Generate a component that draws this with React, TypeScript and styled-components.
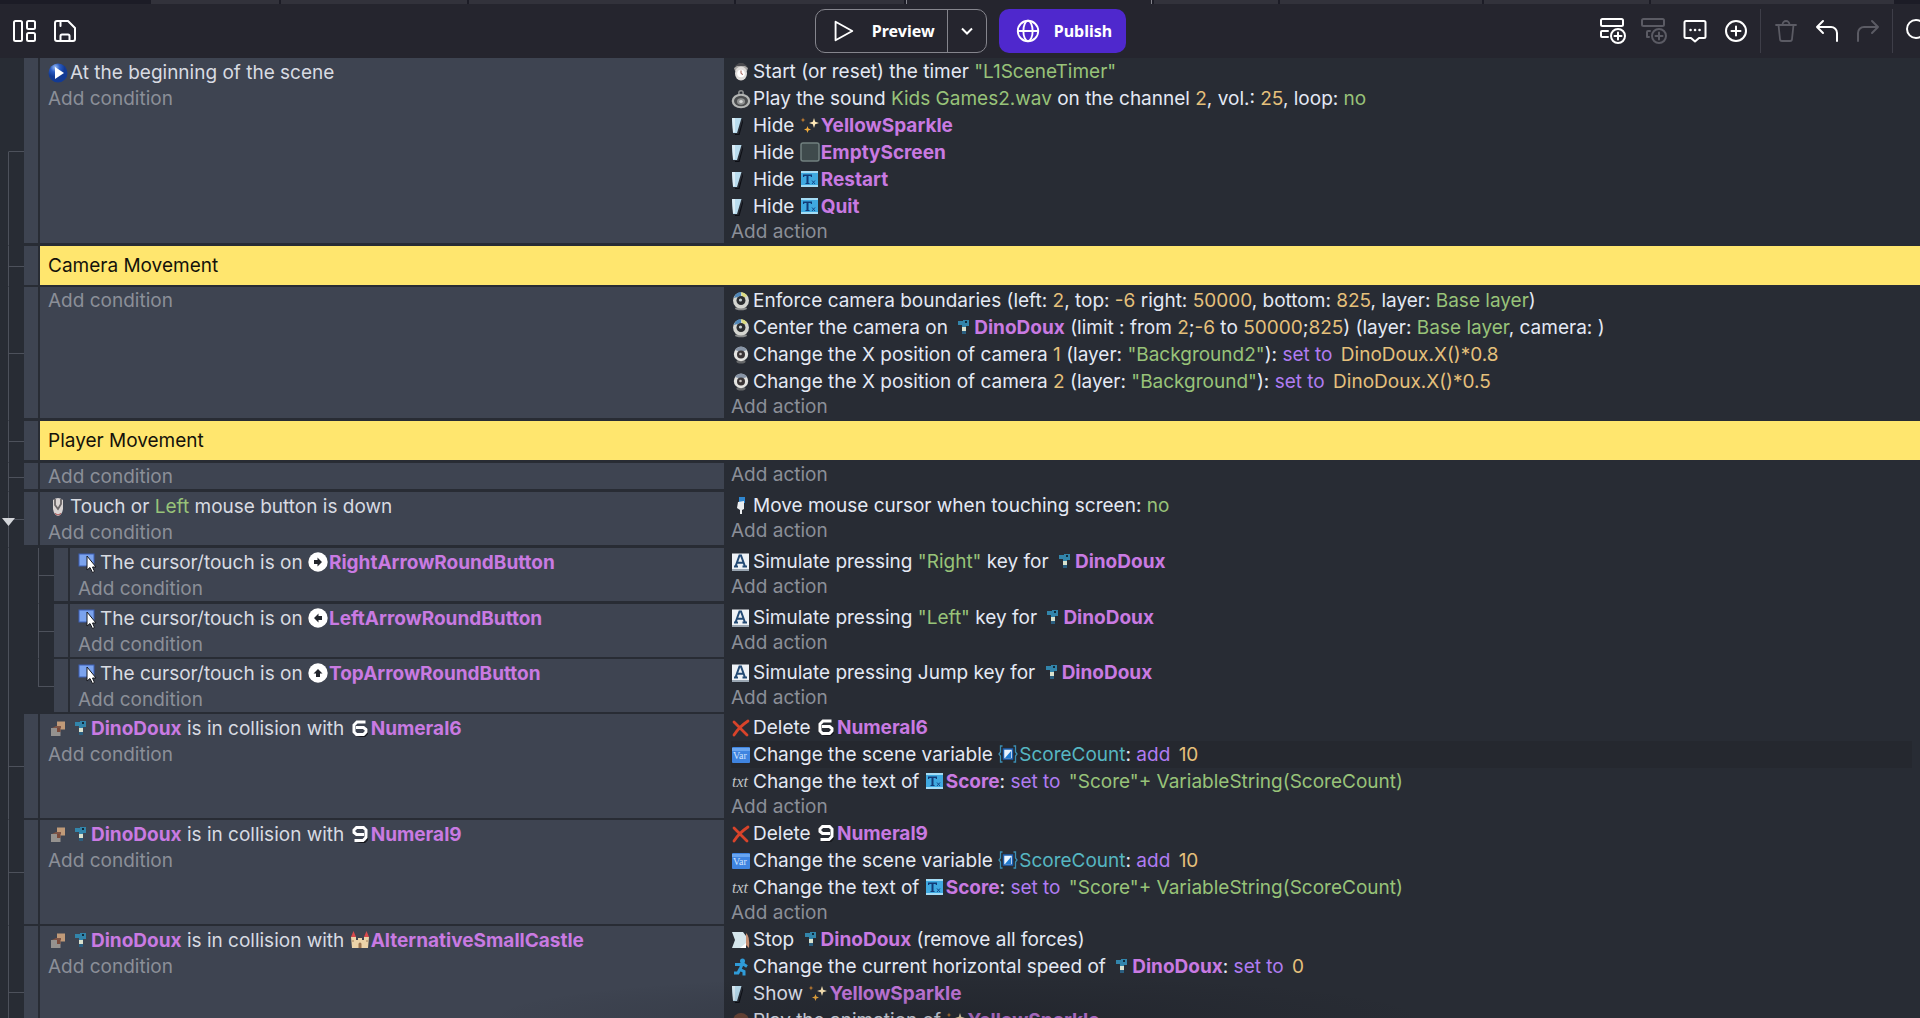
import React, { ReactNode } from 'react';
import styled, { createGlobalStyle, css } from 'styled-components';

const colors = {
  toolbar: '#25252e',
  tabStrip: '#1c1c26',
  tab: '#32323b',
  sheet: '#282c34',
  block: '#3e4451',
  comment: '#ffe66e',
  line: '#4d515b',
  muted: '#8b8f98',
  conditionText: '#d8dbe2',
  actionText: '#e4e9f4',
  object: '#c97ae2',
  number: '#e5c07b',
  string: '#98c379',
  operator: '#b07cf2',
  variable: '#56b6c2',
  primary: '#4f28cd',
};

const GlobalStyle = createGlobalStyle`
  * { box-sizing: border-box; }
  body { margin: 0; overflow: hidden; background: ${colors.sheet}; }
  button { font: inherit; color: inherit; background: none; border: 0; padding: 0; margin: 0; cursor: pointer; }
`;

const Page = styled.div`
  height: 100vh;
  display: flex;
  flex-direction: column;
  overflow: hidden;
  position: relative;
  background: ${colors.sheet};
  font-family: Inter, "Liberation Sans", sans-serif;
  font-size: 19px;
`;

const TabStrip = styled.div`
  display: flex;
  flex: none;
  height: 4px;
  padding-left: 151px;
  gap: 2px;
  background: ${colors.tabStrip};
`;

const Tab = styled.div<{ $width: number; $active?: boolean }>`
  flex: 0 1 ${p => p.$width}px;
  background: ${p => (p.$active ? colors.toolbar : colors.tab)};
  ${p => p.$active && css`border: solid #85858d; border-width: 0 1px;`}
`;

const Toolbar = styled.header`
  flex: none;
  height: 54px;
  padding-left: 21px;
  display: grid;
  grid-template-columns: 1fr auto 1fr;
  align-items: center;
  background: ${colors.toolbar};
  color: #fff;
  overflow: hidden;
`;

const ToolGroup = styled.div<{ $side: 'left' | 'right' }>`
  display: flex;
  align-items: center;
  gap: 12px;
  ${p => (p.$side === 'left' ? 'margin-left: -12px;' : 'justify-content: flex-end; margin-right: -12px;')}
`;

const IconButton = styled.button`
  flex: none;
  width: 29px;
  height: 32px;
  display: grid;
  place-items: center;
  &:disabled { color: #5b5b64; }
`;

const Divider = styled.span`
  width: 1px;
  height: 44px;
  margin: 0 -2px;
  background: #3e3e48;
`;

const MainActions = styled.div`
  display: flex;
  gap: 12px;
  font: 700 16px "Noto Sans", sans-serif;
`;

const SplitButton = styled.div`
  display: flex;
  height: 44px;
  border: 1px solid #85858d;
  border-radius: 10px;
`;

const PreviewButton = styled.button`
  display: flex;
  align-items: center;
  gap: 16px;
  padding: 0 12px 0 14px;
`;

const MenuButton = styled.button`
  width: 39px;
  display: grid;
  place-items: center;
  border-left: 1px solid #85858d;
`;

const PublishButton = styled.button`
  display: flex;
  align-items: center;
  gap: 13px;
  height: 44px;
  padding: 0 14px 0 16px;
  border-radius: 10px;
  background: ${colors.primary};
`;

const Sheet = styled.main`
  flex: 1;
  min-height: 0;
  overflow: hidden;
`;

const Row = styled.div`
  display: flex;
  padding-left: 8px;
`;

const Gutter = styled.div`
  position: relative;
  flex: none;
  width: 16px;
  display: grid;
  grid-template-rows: 1fr 1fr;
`;

const Branch = styled.span<{ $line?: boolean; $tick?: boolean }>`
  border-left: 1px solid ${p => (p.$line ? colors.line : 'transparent')};
  border-bottom: 1px solid ${p => (p.$tick ? colors.line : 'transparent')};
`;

const Rail = styled.span`
  flex: none;
  width: 30px;
  border-left: 1px solid ${colors.line};
`;

const Collapse = styled.button`
  position: absolute;
  left: -6px;
  top: calc(50% - 2px);
  width: 13px;
  height: 8px;
  display: block;
  line-height: 0;
`;

const Body = styled.div<{ $gap: number }>`
  flex: 1;
  min-width: 0;
  display: flex;
  padding-bottom: ${p => p.$gap}px;
`;

const Handle = styled.span`
  flex: none;
  width: 14px;
  margin-right: 2px;
  background: ${colors.block};
`;

const Conditions = styled.section<{ $nested?: boolean }>`
  flex: none;
  width: calc(40vw - ${p => (p.$nested ? 114 : 84)}px);
  padding: 1px 8px 0;
  background: ${colors.block};
  color: ${colors.conditionText};
`;

const Actions = styled.section`
  flex: 1;
  min-width: 0;
  padding-left: 7px;
  color: ${colors.actionText};
`;

const Comment = styled.p`
  flex: 1;
  margin: 0;
  padding: 0 8px;
  height: 39px;
  line-height: 40px;
  background: ${colors.comment};
  color: #14120a;
`;

const Line = styled.div<{ $hover?: boolean }>`
  display: flex;
  align-items: center;
  height: 27px;
  ${p => p.$hover && css`background: #25282f; margin-right: 8px;`}
`;

const Sentence = styled.span`
  line-height: 27px;
  white-space: pre;
`;

const IconSlot = styled.span<{ $object?: boolean }>`
  flex: none;
  display: inline-flex;
  vertical-align: middle;
  width: ${p => (p.$object ? 21 : 22)}px;
  margin-top: ${p => (p.$object ? -3 : 0)}px;
`;

const AddButton = styled.button<{ $wide?: boolean }>`
  display: block;
  height: ${p => (p.$wide ? 25 : 23)}px;
  line-height: 23px;
  color: ${colors.muted};
`;

const Num = styled.span`color: ${colors.number};`;
const Str = styled.span`color: ${colors.string};`;
const Op = styled.span`color: ${colors.operator}; margin-right: 3px;`;
const Var = styled.span`color: ${colors.variable};`;
const Name = styled.strong`color: ${colors.object}; font-weight: 700;`;

const BottomShade = styled.div`
  position: absolute;
  left: 25%;
  right: 25%;
  bottom: 0;
  height: 44px;
  pointer-events: none;
  background: radial-gradient(ellipse at 50% 100%, rgba(20, 22, 28, 0.25), transparent 70%);
`;

/* ---------- small pictures used inside the instructions ---------- */

const glyphs: Record<string, ReactNode> = {
  play: (
    <>
      <defs><radialGradient id="playFill" cx="35%" cy="20%"><stop offset="0" stopColor="#9dbff2" /><stop offset=".5" stopColor="#2a5cc4" /><stop offset="1" stopColor="#123a94" /></radialGradient></defs>
      <circle cx="10" cy="10" r="9.5" fill="url(#playFill)" /><path d="M7 4l9 6-9 6z" fill="#fff" />
    </>
  ),
  timer: (
    <><path d="M4 4l4-3h4l4 3-2 3H6z" fill="#4a4a4e" /><path d="M3 6l3-2 8 0 3 2-1 3H4z" fill="#a9a7a5" /><ellipse cx="10" cy="11.5" rx="6" ry="7" fill="#e0dddb" /><circle cx="10" cy="11.5" r="3.8" fill="#fff" /><path d="M10 8.500v3l2 1" stroke="#a05a50" fill="none" /></>
  ),
  sound: (
    <><circle cx="10" cy="4" r="2.2" fill="none" stroke="#8d8f90" strokeWidth="1.5" /><ellipse cx="10" cy="12" rx="9.300" ry="7.300" fill="#b4b6b5" /><ellipse cx="10" cy="12" rx="7" ry="5.300" fill="#4c4e50" /><ellipse cx="10" cy="12.5" rx="4" ry="3.2" fill="#8f9191" /><ellipse cx="10" cy="12.5" rx="1.8" ry="1.5" fill="#d4d6d6" /></>
  ),
  visible: (
    <><path d="M4 18h3.500L12 3v3L8.500 19H4z" fill="#0c0e14" /><path d="M1 2h9.500L6 17H2z" fill="#b9dcee" /><path d="M1 2h3v14H2z" fill="#dcedf6" /></>
  ),
  sparkle: (
    <><path d="M14 3l1.200 3.800L19 8l-3.800 1.200L14 13l-1.200-3.800L9 8l3.800-1.200z" fill="#ffe9b8" /><path d="M7.500 11l.9 2.600L11 14.500l-2.600.9L7.500 18l-.9-2.600L4 14.500l2.600-.9z" fill="#f2ac3c" /><path d="M3 2.500l.6 1.900 1.900.6-1.900.6L3 7.500l-.6-1.900L.5 5l1.900-.6z" fill="#dc8b30" /></>
  ),
  empty: <rect x="1" y="1" width="18" height="18" rx="2" fill="#3f4a4c" stroke="#71807f" strokeWidth="1.5" />,
  textObject: (
    <><rect x="1" y="2" width="17" height="16" fill="#3fa9e0" /><path d="M1 2h17v2H1zM1 16h17v2H1z" fill="#a5dcf5" /><path d="M3 5.500h9v2.500h-1l-.5-1H8.500v7h1v1H5.500v-1h1V7H4.500L4 8H3z" fill="#113a77" /><path d="M12 11.500l3 3.500m0-3.500L12 15" stroke="#134a8c" /></>
  ),
  camera: (
    <><ellipse cx="10" cy="17.5" rx="6" ry="1.8" fill="#8a8c8c" /><circle cx="10" cy="9.5" r="8" fill="#d4d5d0" /><path d="M3 7a8 8 0 0 1 7-6v4z" fill="#4f86b8" /><path d="M10 1a8 8 0 0 1 6 4l-4 2z" fill="#dcdc80" /><circle cx="10" cy="9.5" r="4.5" fill="#2b2d30" /><circle cx="9.5" cy="9" r="1.6" fill="#c4ccd0" /></>
  ),
  cameraSmall: (
    <><ellipse cx="10" cy="16.5" rx="4.5" ry="2" fill="#66686a" /><circle cx="10" cy="9" r="7.2" fill="#e4e4e1" /><path d="M4 5a7 7 0 0 1 12 0l-3 1H7z" fill="#8794a6" /><circle cx="10" cy="9.5" r="4" fill="#3a3536" /><circle cx="9.5" cy="9" r="1.3" fill="#c9c3c0" /></>
  ),
  mouse: (
    <><path d="M5 3q5-4 10 0v9q-1 6-5 7-4-1-5-7z" fill="#d9d4d3" /><path d="M7 2v6l3 4 3-5V2" stroke="#6a6668" strokeWidth="1.8" fill="none" /><path d="M7 16.500q3 3 6 0" stroke="#a84a4a" fill="none" /></>
  ),
  finger: (
    <><path d="M8 1h6v6H8z" fill="#2f86d0" /><path d="M7 6l6-1v8l-2 1v4H9v-4l-3-2z" fill="#eceef0" /></>
  ),
  cursor: (
    <><rect x="1" y="1" width="15" height="12" fill="#7ba3ee" stroke="#3c5fb4" /><path d="M9 3v14l3-2.500 2.500 5 2-1-2-4.500h3.500z" fill="#fff" stroke="#16181e" /></>
  ),
  key: (
    <><rect x="1" y="1.5" width="17" height="17" fill="#eef2f6" /><path d="M1 17h17v2H1z" fill="#9aa6b2" /><path d="M3 14.500h4M11.500 14.500h4.500M4.500 14.500l4-11h1.500l4 11M6.500 10.800h6" stroke="#234a74" strokeWidth="2" fill="none" /></>
  ),
  dino: (
    <><path d="M5 4h5V3h6v6h-3v2H9V8H5z" fill="#3285ab" /><path d="M12 4h2v2h-2z" fill="#0f2c3c" /><path d="M9 10h4v4H9z" fill="#d9e2cf" /><path d="M9 14h4v3H9z" fill="#2b5f80" /></>
  ),
  collision: (
    <><rect x="9" y="2.5" width="8" height="8" fill="#c09a78" /><path d="M4 9l4-2h5v2z" fill="#7d5446" /><rect x="3" y="9" width="9.5" height="8" fill="#95928f" /><path d="M9 9h3.500v4H9z" fill="#7b4a3a" /></>
  ),
  six: (
    <><path d="M6 19h9l3-3V9l-2 8z" fill="#14151a" /><path d="M15.500 4H7L4 7v7l2.500 2.500h7L16 14v-2.500L13.500 9.500H6" stroke="#fff" strokeWidth="3" fill="none" /></>
  ),
  nine: (
    <><path d="M6 19h9l3-3V9l-2 8z" fill="#14151a" /><path d="M4.500 16.500H13l3-3V6l-2.500-2.500h-7L4 6v2.500L6.500 10.500H14" stroke="#fff" strokeWidth="3" fill="none" /></>
  ),
  castle: (
    <><path d="M1 7l2.500-6L6 7zM14 7l2.500-6L19 7z" fill="#d8484c" /><path d="M1 7h5v3h2V8h4v2h2V7h5l-1 11H2z" fill="#ecd3a8" /><path d="M8.500 18v-4a1.500 1.500 0 0 1 3 0v4z" fill="#9a7550" /><path d="M3 10v2m14-2v2" stroke="#a5825a" /></>
  ),
  cross: <path d="M3 4q5 5 13 13M17 3Q8 9 3 17" stroke="#d8432a" strokeWidth="2.8" fill="none" strokeLinecap="round" />,
  variableIcon: (
    <><rect x="1" y="2" width="18" height="16" rx="1" fill="#3f84e0" /><path d="M1 3h18v3H1z" fill="#69a5f0" /><text x="2" y="14" fontSize="10" fontFamily="Liberation Serif" fill="#cfe3ff">Var</text></>
  ),
  braces: (
    <><path d="M4.500 2H2.500v6L1 10l1.500 2v6h2M15.500 2h2v6l1.500 2-1.500 2v6h-2" stroke="#3b8fb4" strokeWidth="1.3" fill="none" /><rect x="5.5" y="5" width="9" height="10" fill="#eaf4ff" stroke="#1d5fb0" strokeWidth="1.5" /><path d="M7 14l6-7v7z" fill="#1f7ad0" /></>
  ),
  txt: <text x="1" y="15" fontSize="16" fontStyle="italic" fontFamily="Liberation Serif" fill="#c2c4c6">txt</text>,
  stop: (
    <><path d="M1 2h11l3 4v12H1l3-8z" fill="#d5e6ec" /><path d="M15 3q4 3 3 15l-3-3z" fill="#c58e72" /><path d="M9 18l6-5v5z" fill="#fff" /></>
  ),
  run: (
    <><circle cx="11.5" cy="4" r="2.5" fill="#2f9bd8" /><path d="M4 7.500h9l3 2M11 7.500l-2 5 4 2v4M9 12l-2 4H3" stroke="#2f9bd8" strokeWidth="3" fill="none" /></>
  ),
  anim: <><circle cx="10" cy="10" r="8" fill="#6d4636" /><circle cx="10" cy="11" r="4" fill="#b98560" /></>,
};

const roundArrow = (angle: number) => (
  <><circle cx="10" cy="10" r="9.7" fill="#fff" /><path transform={`rotate(${angle} 10 10)`} d="M6 8h3.500V5.500L14 10l-4.500 4.500V12H6z" fill="#22252c" /></>
);
glyphs.right = roundArrow(0);
glyphs.left = roundArrow(180);
glyphs.top = roundArrow(-90);

const Icon = ({ name, object }: { name: string; object?: boolean }) => (
  <IconSlot $object={object}>
    <svg width="20" height="20" viewBox="0 0 20 20" aria-hidden="true">{glyphs[name]}</svg>
  </IconSlot>
);

const Obj = ({ icon, children }: { icon: string; children: string }) => (
  <><Icon name={icon} object /><Name>{children}</Name></>
);

const Dino = () => <Obj icon="dino">DinoDoux</Obj>;

const Item = ({ icon, hover, children }: { icon: string; hover?: boolean; children: ReactNode }) => (
  <Line $hover={hover}><Icon name={icon} /><Sentence>{children}</Sentence></Line>
);

type EventProps = {
  gap?: number;
  first?: boolean;
  last?: boolean;
  nested?: boolean;
  parent?: boolean;
  conditions?: ReactNode;
  children?: ReactNode;
};

const Event = ({ gap = 2, first, last, nested, parent, conditions, children }: EventProps) => (
  <Row>
    {nested && <Rail />}
    <Gutter>
      <Branch $line={!first} $tick />
      <Branch $line={!last} />
      {parent && (
        <Collapse aria-label="Collapse sub-events">
          <svg width="13" height="8" viewBox="0 0 13 8"><path d="M0 0h13L6.500 8z" fill="#d4d6da" /></svg>
        </Collapse>
      )}
    </Gutter>
    <Body $gap={gap}>
      <Handle />
      <Conditions $nested={nested}>
        {conditions}
        <AddButton $wide>Add condition</AddButton>
      </Conditions>
      <Actions>
        {children}
        <AddButton>Add action</AddButton>
      </Actions>
    </Body>
  </Row>
);

const CommentEvent = ({ gap, children }: { gap: number; children: string }) => (
  <Row>
    <Gutter><Branch $line $tick /><Branch $line /></Gutter>
    <Body $gap={gap}><Handle /><Comment>{children}</Comment></Body>
  </Row>
);

const ScoreActions = ({ digit, hover }: { digit: 'six' | 'nine'; hover?: boolean }) => (
  <>
    <Item icon="cross">Delete <Obj icon={digit}>{digit === 'six' ? 'Numeral6' : 'Numeral9'}</Obj></Item>
    <Item icon="variableIcon" hover={hover}>Change the scene variable <Icon name="braces" object /><Var>ScoreCount</Var>: <Op>add</Op> <Num>10</Num></Item>
    <Item icon="txt">Change the text of <Obj icon="textObject">Score</Obj>: <Op>set to</Op> <Str>"Score"+ VariableString(ScoreCount)</Str></Item>
  </>
);

const Stroke = ({ children, size = 28 }: { children: ReactNode; size?: number }) => (
  <svg width={size} height={size} viewBox="0 0 28 28" fill="none" stroke="currentColor" strokeWidth="2" strokeLinecap="round" strokeLinejoin="round" aria-hidden="true">{children}</svg>
);

const AddRow = ({ sub }: { sub?: boolean }) => (
  <Stroke>
    <rect x="2" y="2" width="22" height="7" rx="1.5" />
    <path d={sub ? 'M10 14H8a1 1 0 0 0-1 1v5h2' : 'M9 14H3a1 1 0 0 0-1 1v4a1 1 0 0 0 1 1h6'} />
    <circle cx="19" cy="19" r="7" />
    <path d="M19 15.500v7M15.500 19h7" />
  </Stroke>
);

const tabs = [128, 186, 265, 168, 246, 124, 202, 165, 243];

export default function App() {
  return (
    <Page>
      <GlobalStyle />
      <TabStrip>{tabs.map((w, i) => <Tab key={i} $width={w} $active={i === 4} />)}</TabStrip>
      <Toolbar>
        <ToolGroup $side="left">
          <IconButton aria-label="Panels"><Stroke><rect x="4" y="4" width="8" height="20" rx="1.5" /><rect x="17" y="4" width="8" height="8" rx="1.5" /><rect x="17" y="16" width="8" height="8" rx="1.5" /></Stroke></IconButton>
          <IconButton aria-label="Save"><Stroke><path d="M6 4h11l7 7v11a2 2 0 0 1-2 2H6a2 2 0 0 1-2-2V6a2 2 0 0 1 2-2zM9.500 4v5M9.500 24v-5a1.500 1.500 0 0 1 1.500-1.500h6a1.500 1.500 0 0 1 1.500 1.500v5" /></Stroke></IconButton>
        </ToolGroup>
        <MainActions>
          <SplitButton>
            <PreviewButton><Stroke size={26}><path d="M6 4l18 10L6 24z" /></Stroke>Preview</PreviewButton>
            <MenuButton aria-label="Preview options"><svg width="12" height="8" viewBox="0 0 12 8" fill="none" stroke="currentColor" strokeWidth="2"><path d="M1 1.500l5 5 5-5" /></svg></MenuButton>
          </SplitButton>
          <PublishButton><Stroke size={26}><circle cx="14" cy="14" r="11" /><ellipse cx="14" cy="14" rx="5" ry="11" /><path d="M3 14h22" /></Stroke>Publish</PublishButton>
        </MainActions>
        <ToolGroup $side="right">
          <IconButton aria-label="Add event"><AddRow /></IconButton>
          <IconButton aria-label="Add sub-event" disabled><AddRow sub /></IconButton>
          <IconButton aria-label="Add comment"><Stroke><path d="M5 4h18a1.500 1.500 0 0 1 1.500 1.500v14a1.500 1.500 0 0 1-1.500 1.500h-5l-4 3.500-4-3.500H5a1.500 1.500 0 0 1-1.500-1.500v-14A1.500 1.500 0 0 1 5 4z" /><path d="M9.500 13h.1M14 13h.1M18.500 13h.1" strokeWidth="2.5" /></Stroke></IconButton>
          <IconButton aria-label="Add"><Stroke><circle cx="14" cy="14" r="10" /><path d="M14 9.500v9M9.500 14h9" /></Stroke></IconButton>
          <Divider />
          <IconButton aria-label="Delete" disabled><Stroke><path d="M4 8h20M6.500 8l1.500 14a2 2 0 0 0 2 2h8a2 2 0 0 0 2-2l1.500-14M10.500 8a3.500 4 0 0 1 7 0" strokeWidth="1.8" /></Stroke></IconButton>
          <IconButton aria-label="Undo"><Stroke><path d="M10 4L4 10l6 6M4 10h14a6 6 0 0 1 6 6v8" /></Stroke></IconButton>
          <IconButton aria-label="Redo" disabled><Stroke><path d="M18 4l6 6-6 6M24 10H10a6 6 0 0 0-6 6v8" /></Stroke></IconButton>
          <Divider />
          <IconButton aria-label="Search"><Stroke><circle cx="12" cy="12" r="9" /><path d="M19 19l6 6" /></Stroke></IconButton>
        </ToolGroup>
      </Toolbar>

      <Sheet>
        <Event first gap={3} conditions={<Item icon="play">At the beginning of the scene</Item>}>
          <Item icon="timer">Start (or reset) the timer <Str>"L1SceneTimer"</Str></Item>
          <Item icon="sound">Play the sound <Str>Kids Games2.wav</Str> on the channel <Num>2</Num>, vol.: <Num>25</Num>, loop: <Str>no</Str></Item>
          <Item icon="visible">Hide <Obj icon="sparkle">YellowSparkle</Obj></Item>
          <Item icon="visible">Hide <Obj icon="empty">EmptyScreen</Obj></Item>
          <Item icon="visible">Hide <Obj icon="textObject">Restart</Obj></Item>
          <Item icon="visible">Hide <Obj icon="textObject">Quit</Obj></Item>
        </Event>
        <CommentEvent gap={2}>Camera Movement</CommentEvent>
        <Event gap={3}>
          <Item icon="camera">Enforce camera boundaries (left: <Num>2</Num>, top: <Num>-6</Num> right: <Num>50000</Num>, bottom: <Num>825</Num>, layer: <Str>Base layer</Str>)</Item>
          <Item icon="camera">Center the camera on <Dino /> (limit : from <Num>2</Num>;<Num>-6</Num> to <Num>50000</Num>;<Num>825</Num>) (layer: <Str>Base layer</Str>, camera: )</Item>
          <Item icon="cameraSmall">Change the X position of camera <Num>1</Num> (layer: <Str>"Background2"</Str>): <Op>set to</Op> <Num>DinoDoux.X()*0.8</Num></Item>
          <Item icon="cameraSmall">Change the X position of camera <Num>2</Num> (layer: <Str>"Background"</Str>): <Op>set to</Op> <Num>DinoDoux.X()*0.5</Num></Item>
        </Event>
        <CommentEvent gap={3}>Player Movement</CommentEvent>
        <Event gap={3} />
        <Event gap={3} parent conditions={<Item icon="mouse">Touch or <Str>Left</Str> mouse button is down</Item>}>
          <Item icon="finger">Move mouse cursor when touching screen: <Str>no</Str></Item>
        </Event>
        <Event nested gap={3} conditions={<Item icon="cursor">The cursor/touch is on <Obj icon="right">RightArrowRoundButton</Obj></Item>}>
          <Item icon="key">Simulate pressing <Str>"Right"</Str> key for <Dino /></Item>
        </Event>
        <Event nested gap={2} conditions={<Item icon="cursor">The cursor/touch is on <Obj icon="left">LeftArrowRoundButton</Obj></Item>}>
          <Item icon="key">Simulate pressing <Str>"Left"</Str> key for <Dino /></Item>
        </Event>
        <Event nested last gap={2} conditions={<Item icon="cursor">The cursor/touch is on <Obj icon="top">TopArrowRoundButton</Obj></Item>}>
          <Item icon="key">Simulate pressing Jump key for <Dino /></Item>
        </Event>
        <Event conditions={<Item icon="collision"><Dino /> is in collision with <Obj icon="six">Numeral6</Obj></Item>}>
          <ScoreActions digit="six" hover />
        </Event>
        <Event conditions={<Item icon="collision"><Dino /> is in collision with <Obj icon="nine">Numeral9</Obj></Item>}>
          <ScoreActions digit="nine" />
        </Event>
        <Event conditions={<Item icon="collision"><Dino /> is in collision with <Obj icon="castle">AlternativeSmallCastle</Obj></Item>}>
          <Item icon="stop">Stop <Dino /> (remove all forces)</Item>
          <Item icon="run">Change the current horizontal speed of <Dino />: <Op>set to</Op> <Num>0</Num></Item>
          <Item icon="visible">Show <Obj icon="sparkle">YellowSparkle</Obj></Item>
          <Item icon="anim">Play the animation of <Obj icon="sparkle">YellowSparkle</Obj></Item>
        </Event>
      </Sheet>
      <BottomShade />
    </Page>
  );
}
